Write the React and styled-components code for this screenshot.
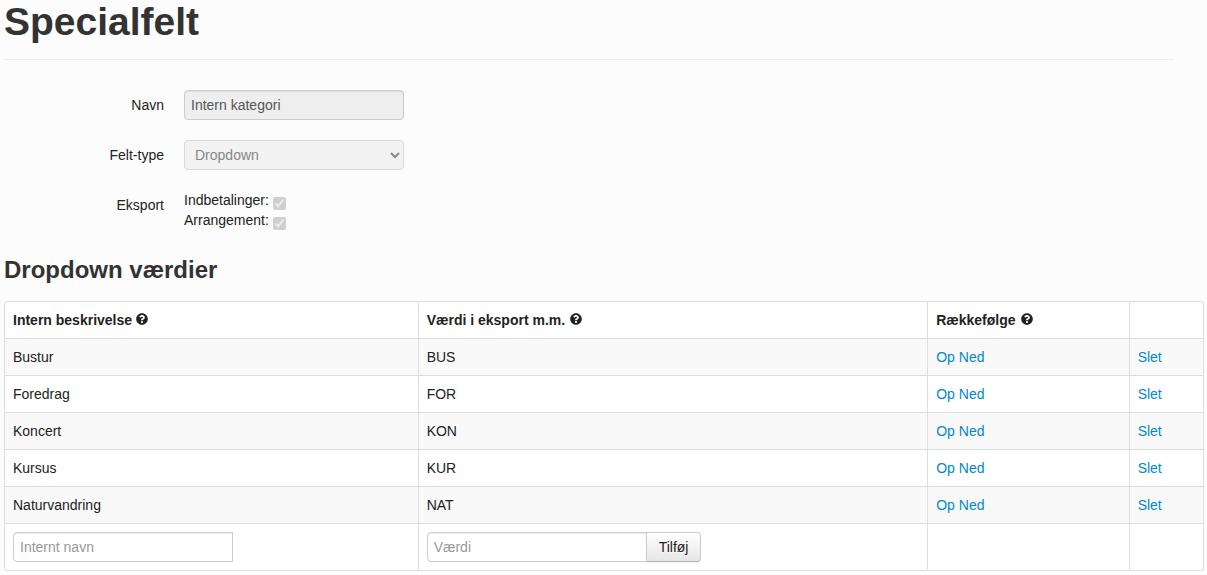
import styled, { createGlobalStyle } from 'styled-components';
import React, { useState } from 'react';
import { FaQuestionCircle } from 'react-icons/fa';

const GlobalStyle = createGlobalStyle`
    body {
        margin: 0;
        background-color: #fcfcfc;
        color: #222;
        font-family: "Liberation Sans", Arial, sans-serif;
        font-size: 14px;
        line-height: 20px;
    }
    input, select, button {
        box-sizing: border-box;
        font: inherit;
    }
`

const Page = styled.main`
    padding: 2px 3px 4px 4px;
`

const PageHeader = styled.header`
    margin: 0 30px 30px 0;
    padding-bottom: 17px;
    border-bottom: 1px solid #eee;
`

const Title = styled.h1`
    margin: 0;
    color: #333;
    font-size: 39px;
    line-height: 40px;
`

const SubTitle = styled.h2`
    margin: 0 0 11px;
    color: #333;
    font-size: 24px;
    line-height: 40px;
`

const ControlGroup = styled.div`
    display: flex;
    align-items: flex-start;
    gap: 20px;
    margin-bottom: 20px;
`

const ControlLabel = styled.label`
    width: 160px;
    padding-top: 5px;
    text-align: right;
`

const CheckRow = styled.label`
    display: flex;
    align-items: center;
    gap: 4px;
    height: 20px;
`

const Checkbox = styled.input`
    width: 13px;
    height: 13px;
    margin: 6px 0 0;
`

const TextInput = styled.input`
    width: 220px;
    height: 30px;
    padding: 4px 6px;
    border: 1px solid #ccc;
    border-radius: ${({ $appended }) => ($appended ? '4px 0 0 4px' : '4px')};
    background-color: #fff;
    color: #555;
    box-shadow: inset 0 1px 1px rgba(0, 0, 0, 0.075);

    &::placeholder {
        color: #999;
    }
    &:disabled {
        background-color: #eee;
    }
`

const Select = styled.select`
    width: 220px;
    height: 30px;
    padding: 4px 6px;
    border: 1px solid #ccc;
    border-radius: 4px;
    background-color: #eee;
    color: #555;
`

const Button = styled.button`
    height: 30px;
    margin-left: -1px;
    padding: 4px 12px;
    border: 1px solid #ccc;
    border-bottom-color: #b3b3b3;
    border-radius: 0 4px 4px 0;
    background: linear-gradient(#fff, #e6e6e6);
    color: #222;
    text-shadow: 0 1px 1px rgba(255, 255, 255, 0.75);
    box-shadow: inset 0 1px 0 rgba(255, 255, 255, 0.2), 0 1px 2px rgba(0, 0, 0, 0.05);
    cursor: pointer;
`

const InputAppend = styled.div`
    display: flex;
`

const Table = styled.table`
    width: 100%;
    table-layout: fixed;
    border: 1px solid #ddd;
    border-left: 0;
    border-collapse: separate;
    border-spacing: 0;
    border-radius: 4px;
    background-color: #fff;
    overflow: hidden;

    tbody tr:nth-child(odd) td {
        background-color: #f9f9f9;
    }
    tbody td, tfoot td {
        border-top: 1px solid #ddd;
    }
    th:first-child {
        border-top-left-radius: 4px;
    }
    tfoot td:first-child {
        border-bottom-left-radius: 4px;
    }
`

const Col = styled.col`
    width: ${({ $width }) => $width};
`

const HeadCell = styled.th`
    padding: 8px;
    border-left: 1px solid #ddd;
    text-align: left;
`

const Cell = styled.td`
    padding: 8px;
    border-left: 1px solid #ddd;
`

const HelpIcon = styled(FaQuestionCircle)`
    width: 12px;
    height: 12px;
    margin-left: ${({ $wide }) => ($wide ? '5px' : '4px')};
`

const Link = styled.a`
    color: #08c;
    text-decoration: none;

    &:hover {
        color: #005580;
        text-decoration: underline;
    }
`

const initialValues = [
    { name: 'Bustur', value: 'BUS' },
    { name: 'Foredrag', value: 'FOR' },
    { name: 'Koncert', value: 'KON' },
    { name: 'Kursus', value: 'KUR' },
    { name: 'Naturvandring', value: 'NAT' },
]

function App() {

    const [rows, setRows] = useState(initialValues)
    const [name, setName] = useState('')
    const [value, setValue] = useState('')

    function handleAdd() {
        if (!name || !value) return
        setRows([...rows, { name, value }])
        setName('')
        setValue('')
    }

    function handleMove(e, from, to) {
        e.preventDefault()
        if (to < 0 || to >= rows.length) return
        const next = [...rows]
        const [row] = next.splice(from, 1)
        next.splice(to, 0, row)
        setRows(next)
    }

    function handleDelete(e, index) {
        e.preventDefault()
        setRows(rows.filter((row, i) => i !== index))
    }

    return (
        <>
            <GlobalStyle />
            <Page>
                <PageHeader>
                    <Title>Specialfelt</Title>
                </PageHeader>

                <ControlGroup>
                    <ControlLabel htmlFor="navn">Navn</ControlLabel>
                    <TextInput id="navn" type="text" defaultValue="Intern kategori" disabled />
                </ControlGroup>
                <ControlGroup>
                    <ControlLabel htmlFor="type">Felt-type</ControlLabel>
                    <Select id="type" disabled>
                        <option>Dropdown</option>
                    </Select>
                </ControlGroup>
                <ControlGroup role="group" aria-labelledby="eksport">
                    <ControlLabel as="span" id="eksport">Eksport</ControlLabel>
                    <div>
                        <CheckRow>Indbetalinger: <Checkbox type="checkbox" defaultChecked disabled /></CheckRow>
                        <CheckRow>Arrangement: <Checkbox type="checkbox" defaultChecked disabled /></CheckRow>
                    </div>
                </ControlGroup>

                <SubTitle>Dropdown værdier</SubTitle>

                <Table>
                    <colgroup>
                        <Col $width="34.5%" />
                        <Col $width="42.5%" />
                        <Col $width="16.8%" />
                        <Col />
                    </colgroup>
                    <thead>
                        <tr>
                            <HeadCell>Intern beskrivelse<HelpIcon /></HeadCell>
                            <HeadCell>Værdi i eksport m.m.<HelpIcon $wide /></HeadCell>
                            <HeadCell>Rækkefølge<HelpIcon $wide /></HeadCell>
                            <HeadCell></HeadCell>
                        </tr>
                    </thead>
                    <tbody>
                        {rows.map((row, index) => (
                            <tr key={row.value}>
                                <Cell>{row.name}</Cell>
                                <Cell>{row.value}</Cell>
                                <Cell>
                                    <Link href="#" onClick={(e) => handleMove(e, index, index - 1)}>Op</Link>{' '}
                                    <Link href="#" onClick={(e) => handleMove(e, index, index + 1)}>Ned</Link>
                                </Cell>
                                <Cell><Link href="#" onClick={(e) => handleDelete(e, index)}>Slet</Link></Cell>
                            </tr>
                        ))}
                    </tbody>
                    <tfoot>
                        <tr>
                            <Cell>
                                <InputAppend>
                                    <TextInput $appended type="text" aria-label="Internt navn" placeholder="Internt navn"
                                        value={name} onChange={(e) => setName(e.target.value)} />
                                </InputAppend>
                            </Cell>
                            <Cell>
                                <InputAppend>
                                    <TextInput $appended type="text" aria-label="Værdi" placeholder="Værdi"
                                        value={value} onChange={(e) => setValue(e.target.value)} />
                                    <Button type="button" onClick={handleAdd}>Tilføj</Button>
                                </InputAppend>
                            </Cell>
                            <Cell></Cell>
                            <Cell></Cell>
                        </tr>
                    </tfoot>
                </Table>
            </Page>
        </>
    )
}

export default App;
